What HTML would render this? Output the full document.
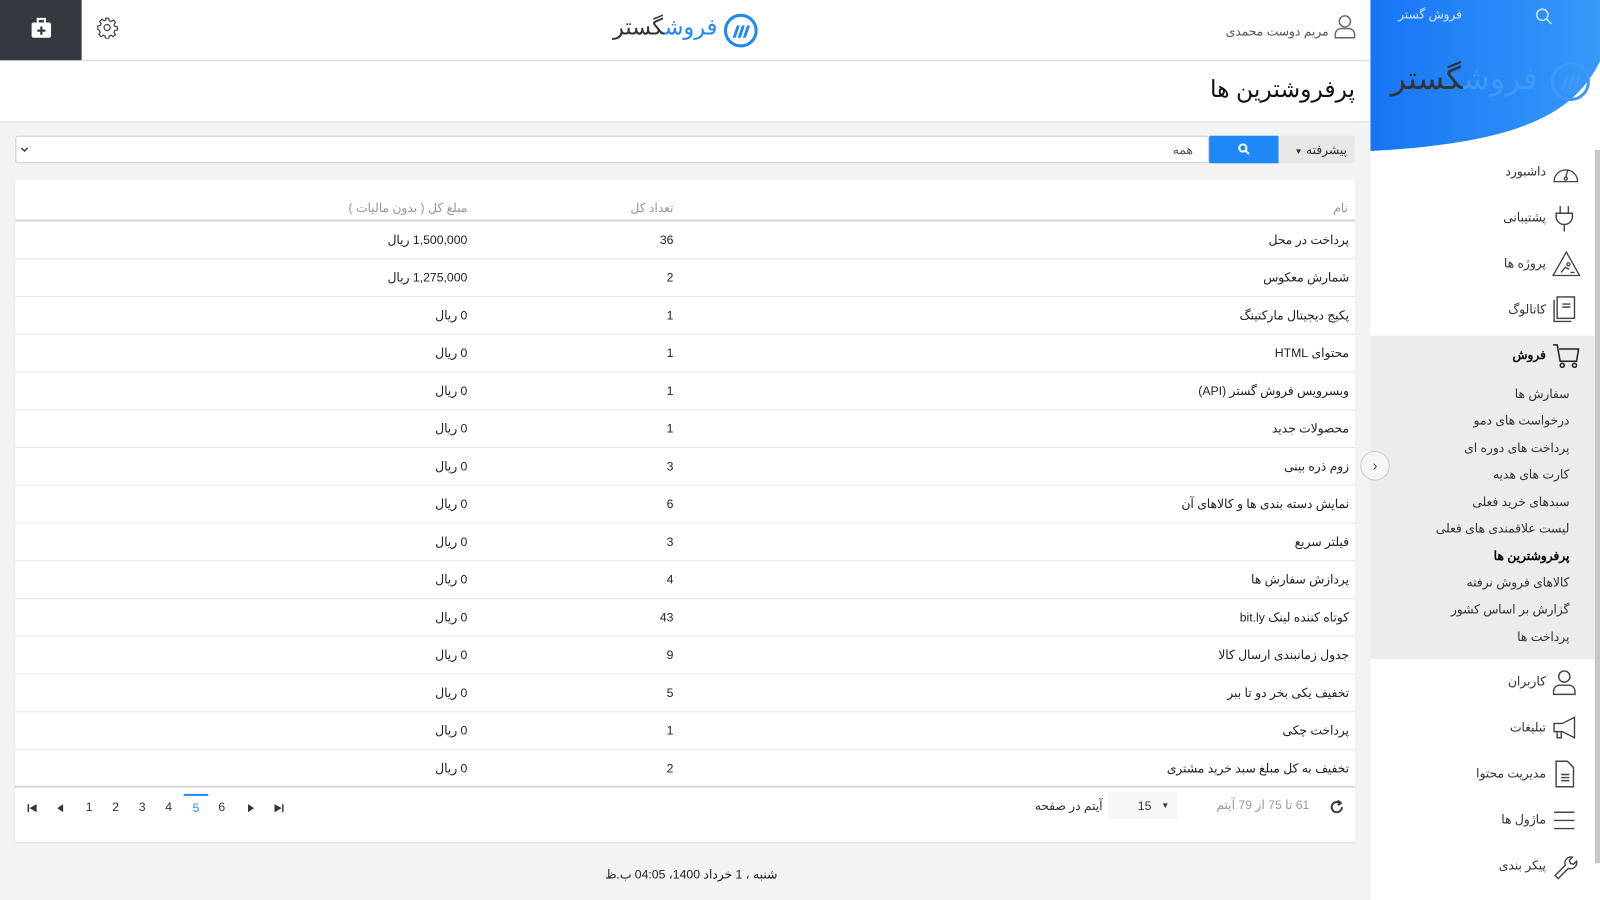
<!DOCTYPE html>
<html lang="fa"><head><meta charset="utf-8">
<style>
*{box-sizing:border-box;margin:0;padding:0}
html,body{overflow:hidden}
body{width:1600px;height:900px;background:#f3f3f3;font-family:"Liberation Sans","Noto Sans CJK SC",sans-serif;font-size:12px;color:#222;position:relative}
#w{position:absolute;left:0;top:0;width:1568px;height:882px;transform:scale(1.020408);transform-origin:0 0}
.abs{position:absolute}
.top{left:0;top:0;width:1343px;height:60px;background:#fff;border-bottom:1px solid #d6d6d6}
.titlebar{left:0;top:60px;width:1343px;height:60px;background:#fff;border-bottom:1px solid #d6d6d6}
.card{left:15px;top:176px;width:1313px;height:649px;background:#fff;box-shadow:0 1px 2px rgba(0,0,0,.12)}
.row{position:absolute;left:0;width:1313px;height:37px;border-bottom:1px solid #e6e6e6}
.row span{position:absolute;top:11px;white-space:nowrap}
.c1{right:6px;direction:rtl}
.c2{right:668px}
.c3{right:870px;direction:rtl}
.side{left:1343px;top:0;width:225px;height:882px;background:#fff}
.mi{position:absolute;right:53px;direction:rtl;font-size:12px;color:#333;white-space:nowrap}
.si{position:absolute;right:30px;direction:rtl;font-size:12px;color:#333;white-space:nowrap}
.ic{position:absolute;left:178px}
</style></head><body><div id="w">

<div class="abs top">
  <div class="abs" style="left:0;top:0;width:80px;height:59px;background:#343a40">
    <svg class="abs" style="left:30px;top:17px" width="21" height="21" viewBox="0 0 21 21"><rect x="1" y="5" width="19" height="15" rx="2" fill="#fff"/><rect x="7" y="1.5" width="7" height="5" fill="none" stroke="#fff" stroke-width="2"/><path d="M10.5 9v8M6.5 13h8" stroke="#343a40" stroke-width="2.2"/></svg>
  </div>
  <svg class="abs" style="left:94px;top:16px" width="22" height="22" viewBox="0 0 24 24" fill="none" stroke="#444" stroke-width="1.3"><circle cx="12" cy="12" r="3.3"/><path d="M10.3 2h3.4l.5 2.7 2 .9 2.3-1.6 2.4 2.4-1.6 2.3.9 2 2.7.5v3.4l-2.7.5-.9 2 1.6 2.3-2.4 2.4-2.3-1.6-2 .9-.5 2.7h-3.4l-.5-2.7-2-.9-2.3 1.6-2.4-2.4 1.6-2.3-.9-2L2 13.7v-3.4l2.7-.5.9-2L4 5.5 6.4 3.1l2.3 1.6 2-.9z"/></svg>
  <div class="abs" style="right:640px;top:14px;direction:rtl;font-size:22px;white-space:nowrap"><span style="color:#1e88f5">فروش</span><span style="color:#333">گستر</span></div>
  <svg class="abs" style="left:709px;top:13px" width="34" height="34" viewBox="0 0 34 34"><circle cx="17" cy="17" r="15" fill="none" stroke="#1e88f5" stroke-width="3"/><path d="M9 24l4-12h3l-4 12zM14 24l4-12h3l-4 12zM19 24l4-12h3l-4 12z" fill="#1e88f5"/></svg>
  <div class="abs" style="right:41px;top:24px;direction:rtl;color:#555;white-space:nowrap">مریم دوست محمدی</div>
  <svg class="abs" style="left:1307px;top:14px" width="22" height="24" viewBox="0 0 22 24" fill="none" stroke="#666" stroke-width="1.4"><circle cx="11" cy="7" r="5.5"/><path d="M1.5 23v-3a6 6 0 0 1 6-6h7a6 6 0 0 1 6 6v3z"/></svg>
</div>

<div class="abs titlebar"><div class="abs" style="right:15px;top:14px;direction:rtl;font-size:23px;color:#111;white-space:nowrap">پرفروشترین ها</div></div>

<div class="abs" style="left:15px;top:133px;width:1170px;height:27px;background:#fff;border:1px solid #ccc;border-radius:3px">
  <svg class="abs" style="left:4px;top:10px" width="8" height="6" viewBox="0 0 8 6" fill="none" stroke="#444" stroke-width="1.5"><path d="M1 1l3 3 3-3"/></svg>
  <div class="abs" style="right:15px;top:6px;color:#555">همه</div>
</div>
<div class="abs" style="left:1185px;top:133px;width:68px;height:27px;background:#1e88f5"><svg class="abs" style="left:28px;top:7px" width="12" height="12" viewBox="0 0 12 12" fill="none" stroke="#fff" stroke-width="2"><circle cx="5" cy="5" r="3.5"/><path d="M7.5 7.5l3.5 3.5"/></svg></div>
<div class="abs" style="left:1253px;top:133px;width:75px;height:27px;background:#e8e8e8;border-radius:0 3px 3px 0"><div class="abs" style="right:8px;top:7px;direction:rtl;color:#333;white-space:nowrap">پیشرفته <span style="font-size:8px">▼</span></div></div>

<div class="abs card">
  <div class="abs" style="left:0;top:0;width:1313px;height:41px;border-bottom:2px solid #d6d6d6;color:#999">
    <span class="abs" style="right:7px;top:21px">نام</span>
    <span class="abs" style="right:668px;top:21px">تعداد کل</span>
    <span class="abs" style="right:870px;top:21px;direction:rtl">مبلغ کل ( بدون مالیات )</span>
  </div>
  <div class="row" style="top:41px"><span class="c1">پرداخت در محل</span><span class="c2">36</span><span class="c3">1,500,000 ریال</span></div>
  <div class="row" style="top:78px"><span class="c1">شمارش معکوس</span><span class="c2">2</span><span class="c3">1,275,000 ریال</span></div>
  <div class="row" style="top:115px"><span class="c1">پکیج دیجیتال مارکتینگ</span><span class="c2">1</span><span class="c3">0 ریال</span></div>
  <div class="row" style="top:152px"><span class="c1">محتوای HTML</span><span class="c2">1</span><span class="c3">0 ریال</span></div>
  <div class="row" style="top:189px"><span class="c1">وبسرویس فروش گستر (API)</span><span class="c2">1</span><span class="c3">0 ریال</span></div>
  <div class="row" style="top:226px"><span class="c1">محصولات جدید</span><span class="c2">1</span><span class="c3">0 ریال</span></div>
  <div class="row" style="top:263px"><span class="c1">زوم ذره بینی</span><span class="c2">3</span><span class="c3">0 ریال</span></div>
  <div class="row" style="top:300px"><span class="c1">نمایش دسته بندی ها و کالاهای آن</span><span class="c2">6</span><span class="c3">0 ریال</span></div>
  <div class="row" style="top:337px"><span class="c1">فیلتر سریع</span><span class="c2">3</span><span class="c3">0 ریال</span></div>
  <div class="row" style="top:374px"><span class="c1">پردازش سفارش ها</span><span class="c2">4</span><span class="c3">0 ریال</span></div>
  <div class="row" style="top:411px"><span class="c1">کوتاه کننده لینک bit.ly</span><span class="c2">43</span><span class="c3">0 ریال</span></div>
  <div class="row" style="top:448px"><span class="c1">جدول زمانبندی ارسال کالا</span><span class="c2">9</span><span class="c3">0 ریال</span></div>
  <div class="row" style="top:485px"><span class="c1">تخفیف یکی بخر دو تا ببر</span><span class="c2">5</span><span class="c3">0 ریال</span></div>
  <div class="row" style="top:522px"><span class="c1">پرداخت چکی</span><span class="c2">1</span><span class="c3">0 ریال</span></div>
  <div class="row" style="top:559px;border-bottom:2px solid #d6d6d6"><span class="c1">تخفیف به کل مبلغ سبد خرید مشتری</span><span class="c2">2</span><span class="c3">0 ریال</span></div>
  <div class="abs" style="left:0;top:598px;width:1313px;height:34px;color:#333">
    <svg class="abs" style="left:12px;top:14px" width="9" height="8" viewBox="0 0 9 8" fill="#333"><rect x="0" y="0" width="1.5" height="8"/><path d="M9 0v8L2 4z"/></svg>
    <svg class="abs" style="left:41px;top:14px" width="6" height="8" viewBox="0 0 6 8" fill="#333"><path d="M6 0v8L0 4z"/></svg>
    <span class="abs" style="left:69px;top:10px">1</span>
    <span class="abs" style="left:95px;top:10px">2</span>
    <span class="abs" style="left:121px;top:10px">3</span>
    <span class="abs" style="left:147px;top:10px">4</span>
    <span class="abs" style="left:165px;top:4px;width:24px;border-top:2px solid #1e88f5;text-align:center;color:#1e88f5;padding-top:5px">5</span>
    <span class="abs" style="left:199px;top:10px">6</span>
    <svg class="abs" style="left:228px;top:14px" width="6" height="8" viewBox="0 0 6 8" fill="#333"><path d="M0 0v8L6 4z"/></svg>
    <svg class="abs" style="left:254px;top:14px" width="9" height="8" viewBox="0 0 9 8" fill="#333"><path d="M0 0v8L7 4z"/><rect x="7.5" y="0" width="1.5" height="8"/></svg>
    <span class="abs" style="left:999px;top:9px;direction:rtl">آیتم در صفحه</span>
    <div class="abs" style="left:1071px;top:2px;width:68px;height:27px;background:#f7f7f7"><span class="abs" style="left:29px;top:7px">15</span><span class="abs" style="left:52px;top:9px;font-size:8px">▼</span></div>
    <span class="abs" style="left:1177px;top:8px;color:#999;direction:rtl">61 تا 75 از 79 آیتم</span>
    <svg class="abs" style="left:1287px;top:9px" width="16" height="16" viewBox="0 0 16 16" fill="none" stroke="#333" stroke-width="1.8"><path d="M13 8a5 5 0 1 1-2-4"/><path d="M9 1.5l3 2.5-3 2" /></svg>
  </div>
</div>

<div class="abs" style="left:593px;top:850px;direction:rtl;color:#222;white-space:nowrap">شنبه ، 1 خرداد 1400، 04:05 ب.ظ</div>

<div class="abs side">
  <svg class="abs" style="left:0;top:0" width="225" height="150" viewBox="0 0 225 150"><defs><linearGradient id="g" x1="0" x2="1"><stop offset="0" stop-color="#1675f5"/><stop offset="1" stop-color="#3699f9"/></linearGradient></defs><path d="M0 0H225V60C200 110 150 140 0 148Z" fill="url(#g)"/></svg>
  <div class="abs" style="left:27px;top:7px;color:#cfe3ff;direction:rtl;white-space:nowrap">فروش گستر</div>
  <svg class="abs" style="left:161px;top:7px" width="18" height="18" viewBox="0 0 18 18" fill="none" stroke="#cfe3ff" stroke-width="1.5"><circle cx="7.5" cy="7.5" r="5.5"/><path d="M11.5 11.5l5 5"/></svg>
  <div class="abs" style="right:61px;top:59px;direction:rtl;font-size:31px;white-space:nowrap"><span style="color:#3f98f7">فروش</span><span style="color:#333">گستر</span></div>
  <svg class="abs" style="left:176px;top:60px" width="40" height="40" viewBox="0 0 34 34"><circle cx="17" cy="17" r="15" fill="none" stroke="#3f98f7" stroke-width="2.5"/><path d="M9 24l4-12h3l-4 12zM14 24l4-12h3l-4 12zM19 24l4-12h3l-4 12z" fill="#3f98f7"/></svg>

  <div class="mi" style="top:161px">داشبورد</div>
  <svg class="ic" style="top:157px" width="27" height="24" viewBox="0 0 27 24" fill="none" stroke="#444" stroke-width="1.3"><path d="M2 21a11.5 11.5 0 1 1 23 0z"/><path d="M13.5 17l2-8"/><circle cx="13.5" cy="18" r="1.5"/></svg>
  <div class="mi" style="top:206px">پشتیبانی</div>
  <svg class="ic" style="top:201px" width="24" height="26" viewBox="0 0 24 26" fill="none" stroke="#444" stroke-width="1.4"><path d="M8 1v7M16 1v7M4 8h16v3a8 8 0 0 1-16 0zM12 19v7"/></svg>
  <div class="mi" style="top:251px">پروژه ها</div>
  <svg class="ic" style="top:246px" width="28" height="25" viewBox="0 0 28 25" fill="none" stroke="#444" stroke-width="1.3"><path d="M14 1L1 24h26z"/><path d="M9 21l4-5 4 2M18 21h4"/><circle cx="16" cy="13" r="1.5"/></svg>
  <div class="mi" style="top:296px">کاتالوگ</div>
  <svg class="ic" style="top:290px" width="24" height="26" viewBox="0 0 24 26" fill="none" stroke="#444" stroke-width="1.4"><rect x="5" y="1" width="17" height="21"/><path d="M2 4v21h17M10 8h8M10 11h8"/></svg>

  <div class="abs" style="left:0;top:329px;width:220px;height:317px;background:#ececec"></div>
  <div class="mi" style="top:341px;font-weight:bold;color:#111">فروش</div>
  <svg class="ic" style="top:336px" width="28" height="26" viewBox="0 0 28 26" fill="none" stroke="#222" stroke-width="1.5"><path d="M1 2h4l3 16h16l2-12H7"/><circle cx="10" cy="22" r="2"/><circle cx="22" cy="22" r="2"/></svg>
  <div class="si" style="top:379px">سفارش ها</div>
  <div class="si" style="top:405px">درخواست های دمو</div>
  <div class="si" style="top:432px">پرداخت های دوره ای</div>
  <div class="si" style="top:458px">کارت های هدیه</div>
  <div class="si" style="top:485px">سبدهای خرید فعلی</div>
  <div class="si" style="top:511px">لیست علاقمندی های فعلی</div>
  <div class="si" style="top:538px;color:#000;font-weight:bold">پرفروشترین ها</div>
  <div class="si" style="top:564px">کالاهای فروش نرفته</div>
  <div class="si" style="top:590px">گزارش بر اساس کشور</div>
  <div class="si" style="top:617px">پرداخت ها</div>

  <div class="mi" style="top:661px">کاربران</div>
  <svg class="ic" style="top:656px" width="24" height="26" viewBox="0 0 24 26" fill="none" stroke="#444" stroke-width="1.4"><circle cx="12" cy="7" r="5.5"/><path d="M1.5 24.5v-3a6 6 0 0 1 6-6h9a6 6 0 0 1 6 6v3z"/></svg>
  <div class="mi" style="top:706px">تبلیغات</div>
  <svg class="ic" style="top:701px" width="28" height="24" viewBox="0 0 28 24" fill="none" stroke="#444" stroke-width="1.4"><path d="M2 8h8l12-6v20l-12-6H2zM5 16v6h4v-6M22 7v10"/></svg>
  <div class="mi" style="top:751px">مدیریت محتوا</div>
  <svg class="ic" style="top:745px" width="24" height="27" viewBox="0 0 24 27" fill="none" stroke="#444" stroke-width="1.4"><path d="M4 1h11l6 6v19H4z"/><path d="M9 14h8M9 17h8M9 20h8"/></svg>
  <div class="mi" style="top:796px">ماژول ها</div>
  <svg class="ic" style="top:794px" width="24" height="20" viewBox="0 0 24 20" stroke="#444" stroke-width="1.4"><path d="M2 2h20M2 10h20M2 18h20"/></svg>
  <div class="mi" style="top:841px">پیکر بندی</div>
  <svg class="ic" style="top:836px" width="26" height="26" viewBox="0 0 26 26" fill="none" stroke="#444" stroke-width="1.4"><path d="M3 22l10-10a6 6 0 0 1 7-8l-3 3 1 3 3 1 3-3a6 6 0 0 1-8 7L6 25z"/></svg>

  <div class="abs" style="left:220px;top:147px;width:5px;height:699px;background:#c8c8c8"></div>
</div>
<div class="abs" style="left:1333px;top:442px;width:29px;height:29px;border-radius:50%;border:1px solid #ccc;background:#f5f5f5;text-align:center;line-height:26px;color:#444;font-size:14px">›</div>
</div></body></html>
